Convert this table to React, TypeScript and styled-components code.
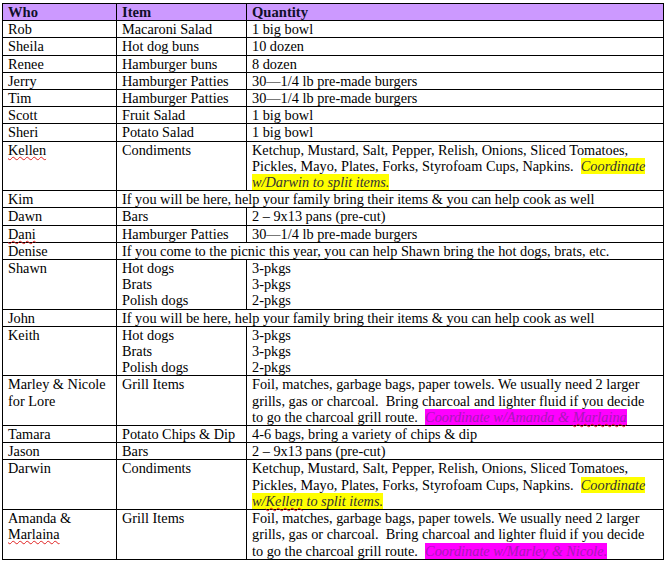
import React from 'react';
import styled, { createGlobalStyle } from 'styled-components';

const GlobalStyle = createGlobalStyle`
  body {
    margin: 0;
    background: #ffffff;
  }
`;

const Page = styled.div`
  padding: 3px 0 0 2px;
  font-family: "Liberation Serif", "Times New Roman", serif;
  font-size: 14.3px;
  color: #000;
`;

const Table = styled.table`
  border-collapse: collapse;
  width: 662px;
  table-layout: fixed;
`;

const HeadCell = styled.th`
  background: #cc99ff;
  border: 1px solid #000;
  text-align: left;
  font-weight: bold;
  font-size: 14.6px;
  padding: 0 5px;
  line-height: 16.2px;
  color: #10102a;
`;

const Cell = styled.td`
  border: 1px solid #000;
  vertical-align: top;
  padding: 0 5px;
  line-height: 16.2px;
`;

const Line = styled.div``;

const Misspelled = styled.span`
  text-decoration: underline wavy #e02020;
  text-decoration-thickness: 1px;
  text-underline-offset: 1px;
`;

const Highlight = styled.span<{ $tone: 'yellow' | 'magenta' }>`
  font-style: italic;
  background: ${({ $tone }) => ($tone === 'yellow' ? '#ffff00' : '#ff00ff')};
  color: ${({ $tone }) => ($tone === 'yellow' ? '#333' : '#a818b8')};
`;

type Row = {
  who: React.ReactNode;
  item?: React.ReactNode;
  qty: React.ReactNode;
  wide?: boolean;
};

const condiments = 'Ketchup, Mustard, Salt, Pepper, Relish, Onions, Sliced Tomatoes, Pickles, Mayo, Plates, Forks, Styrofoam Cups, Napkins.\u00a0 ';
const grill = 'Foil, matches, garbage bags, paper towels. We usually need 2 larger grills, gas or charcoal.\u00a0 Bring charcoal and lighter fluid if you decide to go the charcoal grill route.\u00a0 ';
const helpOut = 'If you will be here, help your family bring their items & you can help cook as well';

const lines = (items: string[]) => items.map((t, i) => <Line key={i}>{t}</Line>);

const rows: Row[] = [
  { who: 'Rob', item: 'Macaroni Salad', qty: '1 big bowl' },
  { who: 'Sheila', item: 'Hot dog buns', qty: '10 dozen' },
  { who: 'Renee', item: 'Hamburger buns', qty: '8 dozen' },
  { who: 'Jerry', item: 'Hamburger Patties', qty: '30\u20141/4 lb pre-made burgers' },
  { who: 'Tim', item: 'Hamburger Patties', qty: '30\u20141/4 lb pre-made burgers' },
  { who: 'Scott', item: 'Fruit Salad', qty: '1 big bowl' },
  { who: 'Sheri', item: 'Potato Salad', qty: '1 big bowl' },
  {
    who: <Misspelled>Kellen</Misspelled>,
    item: 'Condiments',
    qty: (
      <>
        {condiments}
        <Highlight $tone="yellow">Coordinate w/Darwin to split items.</Highlight>
      </>
    ),
  },
  { who: 'Kim', qty: helpOut, wide: true },
  { who: 'Dawn', item: 'Bars', qty: '2 \u2013 9x13 pans (pre-cut)' },
  { who: <Misspelled>Dani</Misspelled>, item: 'Hamburger Patties', qty: '30\u20141/4 lb pre-made burgers' },
  { who: 'Denise', qty: 'If you come to the picnic this year, you can help Shawn bring the hot dogs, brats, etc.', wide: true },
  { who: 'Shawn', item: lines(['Hot dogs', 'Brats', 'Polish dogs']), qty: lines(['3-pkgs', '3-pkgs', '2-pkgs']) },
  { who: 'John', qty: helpOut, wide: true },
  { who: 'Keith', item: lines(['Hot dogs', 'Brats', 'Polish dogs']), qty: lines(['3-pkgs', '3-pkgs', '2-pkgs']) },
  {
    who: 'Marley & Nicole for Lore',
    item: 'Grill Items',
    qty: (
      <>
        {grill}
        <Highlight $tone="magenta">
          Coordinate w/Amanda &amp; <Misspelled>Marlaina</Misspelled>
        </Highlight>
      </>
    ),
  },
  { who: 'Tamara', item: 'Potato Chips & Dip', qty: '4-6 bags, bring a variety of chips & dip' },
  { who: 'Jason', item: 'Bars', qty: '2 \u2013 9x13 pans (pre-cut)' },
  {
    who: 'Darwin',
    item: 'Condiments',
    qty: (
      <>
        {condiments}
        <Highlight $tone="yellow">
          Coordinate w/<Misspelled>Kellen</Misspelled> to split items.
        </Highlight>
      </>
    ),
  },
  {
    who: (
      <>
        Amanda &amp; <Misspelled>Marlaina</Misspelled>
      </>
    ),
    item: 'Grill Items',
    qty: (
      <>
        {grill}
        <Highlight $tone="magenta">Coordinate w/Marley &amp; Nicole.</Highlight>
      </>
    ),
  },
];

const App = () => (
  <>
    <GlobalStyle />
    <Page>
      <Table>
        <colgroup>
          <col style={{ width: 114 }} />
          <col style={{ width: 130 }} />
          <col />
        </colgroup>
        <thead>
          <tr>
            <HeadCell>Who</HeadCell>
            <HeadCell>Item</HeadCell>
            <HeadCell>Quantity</HeadCell>
          </tr>
        </thead>
        <tbody>
          {rows.map((row, i) => (
            <tr key={i}>
              <Cell>{row.who}</Cell>
              {row.wide ? (
                <Cell colSpan={2}>{row.qty}</Cell>
              ) : (
                <>
                  <Cell>{row.item}</Cell>
                  <Cell>{row.qty}</Cell>
                </>
              )}
            </tr>
          ))}
        </tbody>
      </Table>
    </Page>
  </>
);

export default App;
